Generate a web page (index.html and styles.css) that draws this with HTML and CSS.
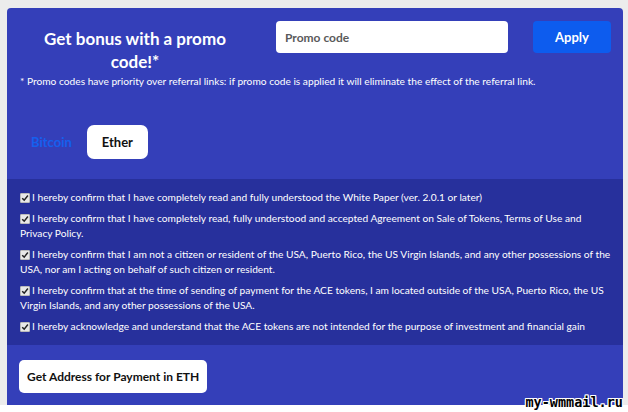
FILE: index.html
```html
<!DOCTYPE html>
<html>
<head>
<meta charset="utf-8">
<link rel="stylesheet" href="styles.css">
</head>
<body>
<div class="page">
  <div class="panel">
    <div class="promo">
      <div class="promo-row">
        <h2 class="promo-title">Get bonus with a promo code!*</h2>
        <input class="promo-input" type="text" placeholder="Promo code">
        <button class="apply-btn">Apply</button>
      </div>
      <p class="promo-note">* Promo codes have priority over referral links: if promo code is applied it will eliminate the effect of the referral link.</p>
    </div>
    <div class="tabs">
      <span class="tab">Bitcoin</span>
      <span class="tab active">Ether</span>
    </div>
    <div class="confirms">
      <label class="confirm"><span class="cb"><svg viewBox="0 0 10 10" width="8" height="8"><path d="M1.5 5.2 L4 7.6 L8.6 1.8" fill="none" stroke="#222" stroke-width="1.8"/></svg></span>I hereby confirm that I have completely read and fully understood the White Paper (ver. 2.0.1 or later)</label>
      <label class="confirm"><span class="cb"><svg viewBox="0 0 10 10" width="8" height="8"><path d="M1.5 5.2 L4 7.6 L8.6 1.8" fill="none" stroke="#222" stroke-width="1.8"/></svg></span>I hereby confirm that I have completely read, fully understood and accepted Agreement on Sale of Tokens, Terms of Use and Privacy Policy.</label>
      <label class="confirm"><span class="cb"><svg viewBox="0 0 10 10" width="8" height="8"><path d="M1.5 5.2 L4 7.6 L8.6 1.8" fill="none" stroke="#222" stroke-width="1.8"/></svg></span>I hereby confirm that I am not a citizen or resident of the USA, Puerto Rico, the US Virgin Islands, and any other possessions of the USA, nor am I acting on behalf of such citizen or resident.</label>
      <label class="confirm"><span class="cb"><svg viewBox="0 0 10 10" width="8" height="8"><path d="M1.5 5.2 L4 7.6 L8.6 1.8" fill="none" stroke="#222" stroke-width="1.8"/></svg></span>I hereby confirm that at the time of sending of payment for the ACE tokens, I am located outside of the USA, Puerto Rico, the US Virgin Islands, and any other possessions of the USA.</label>
      <label class="confirm"><span class="cb"><svg viewBox="0 0 10 10" width="8" height="8"><path d="M1.5 5.2 L4 7.6 L8.6 1.8" fill="none" stroke="#222" stroke-width="1.8"/></svg></span>I hereby acknowledge and understand that the ACE tokens are not intended for the purpose of investment and financial gain</label>
    </div>
    <div class="actions">
      <button class="address-btn">Get Address for Payment in ETH</button>
    </div>
  </div>
  <div class="watermark">my-wmmail.ru</div>
</div>
</body>
</html>
```
FILE: styles.css
```css
* { box-sizing: border-box; }
html, body { margin: 0; padding: 0; }
body {
  width: 628px;
  height: 412px;
  background: #ffffff;
  font-family: Lato, "Open Sans", sans-serif;
  overflow: hidden;
}
.page {
  position: relative;
  width: 628px;
  height: 412px;
  padding: 8px 5px 7px 7px;
  background: linear-gradient(to bottom, #ececec 0, #ececec 405px, #ffffff 405px);
}
.panel {
  background: #343fb9;
  border-radius: 4px 4px 0 0;
  height: 397px;
  display: flex;
  flex-direction: column;
  overflow: hidden;
}
.promo { padding: 13px 12px 0 13px; }
.promo-row {
  display: flex;
  align-items: flex-start;
}
.promo-title {
  margin: 0 31px 0 5px;
  width: 220px;
  color: #fff;
  font-size: 17px;
  font-weight: 700;
  line-height: 23px;
  text-align: center;
  padding-top: 6px;
}
.promo-input {
  width: 232px;
  height: 32px;
  border: none;
  border-radius: 4px;
  background: #fff;
  padding: 0 9px;
  font-family: inherit;
  font-size: 12px;
  font-weight: 700;
  color: #555;
  outline: none;
}
.promo-input::placeholder { color: #5a5a5a; }
.apply-btn {
  margin-left: 25px;
  width: 78px;
  height: 32px;
  border: none;
  border-radius: 4px;
  background: #0d5cee;
  color: #fff;
  font-family: inherit;
  font-size: 13px;
  font-weight: 700;
}
.promo-note {
  margin: 1px 0 0 0;
  color: #fff;
  font-size: 10.2px;
  line-height: 14px;
}
.tabs {
  display: flex;
  align-items: center;
  gap: 15px;
  padding: 37px 0 0 24px;
}
.tab {
  font-size: 13px;
  font-weight: 700;
  color: #1560ee;
  line-height: 34px;
}
.tab.active {
  background: #fff;
  color: #111;
  border-radius: 7px;
  padding: 0 15px;
  height: 34px;
}
.confirms {
  margin-top: 20px;
  background: #27309c;
  padding: 11px 12px 11px 13px;
  display: flex;
  flex-direction: column;
  gap: 6px;
}
.confirm {
  display: block;
  color: #fff;
  font-size: 10.2px;
  line-height: 15px;
}
.cb {
  display: inline-flex;
  align-items: center;
  justify-content: center;
  width: 10px;
  height: 10px;
  margin-right: 2px;
  vertical-align: -1px;
  background: #e8e8e8;
  border: 1px solid #bbb;
  border-radius: 1px;
}
.actions {
  padding: 15px 12px 0 12px;
}
.address-btn {
  height: 33px;
  padding: 0 8px;
  border: none;
  border-radius: 5px;
  background: #fff;
  color: #111;
  font-family: inherit;
  font-size: 12px;
  font-weight: 700;
}
.watermark {
  position: absolute;
  right: 5px;
  bottom: 2px;
  font-family: "DejaVu Sans Mono", monospace;
  font-weight: 700;
  font-size: 13.5px;
  line-height: 15px;
  color: #000;
  text-shadow: 1px 0 #fff, -1px 0 #fff, 0 1px #fff, 0 -1px #fff, 1px 1px #fff, -1px -1px #fff, 1px -1px #fff, -1px 1px #fff;
}
```
